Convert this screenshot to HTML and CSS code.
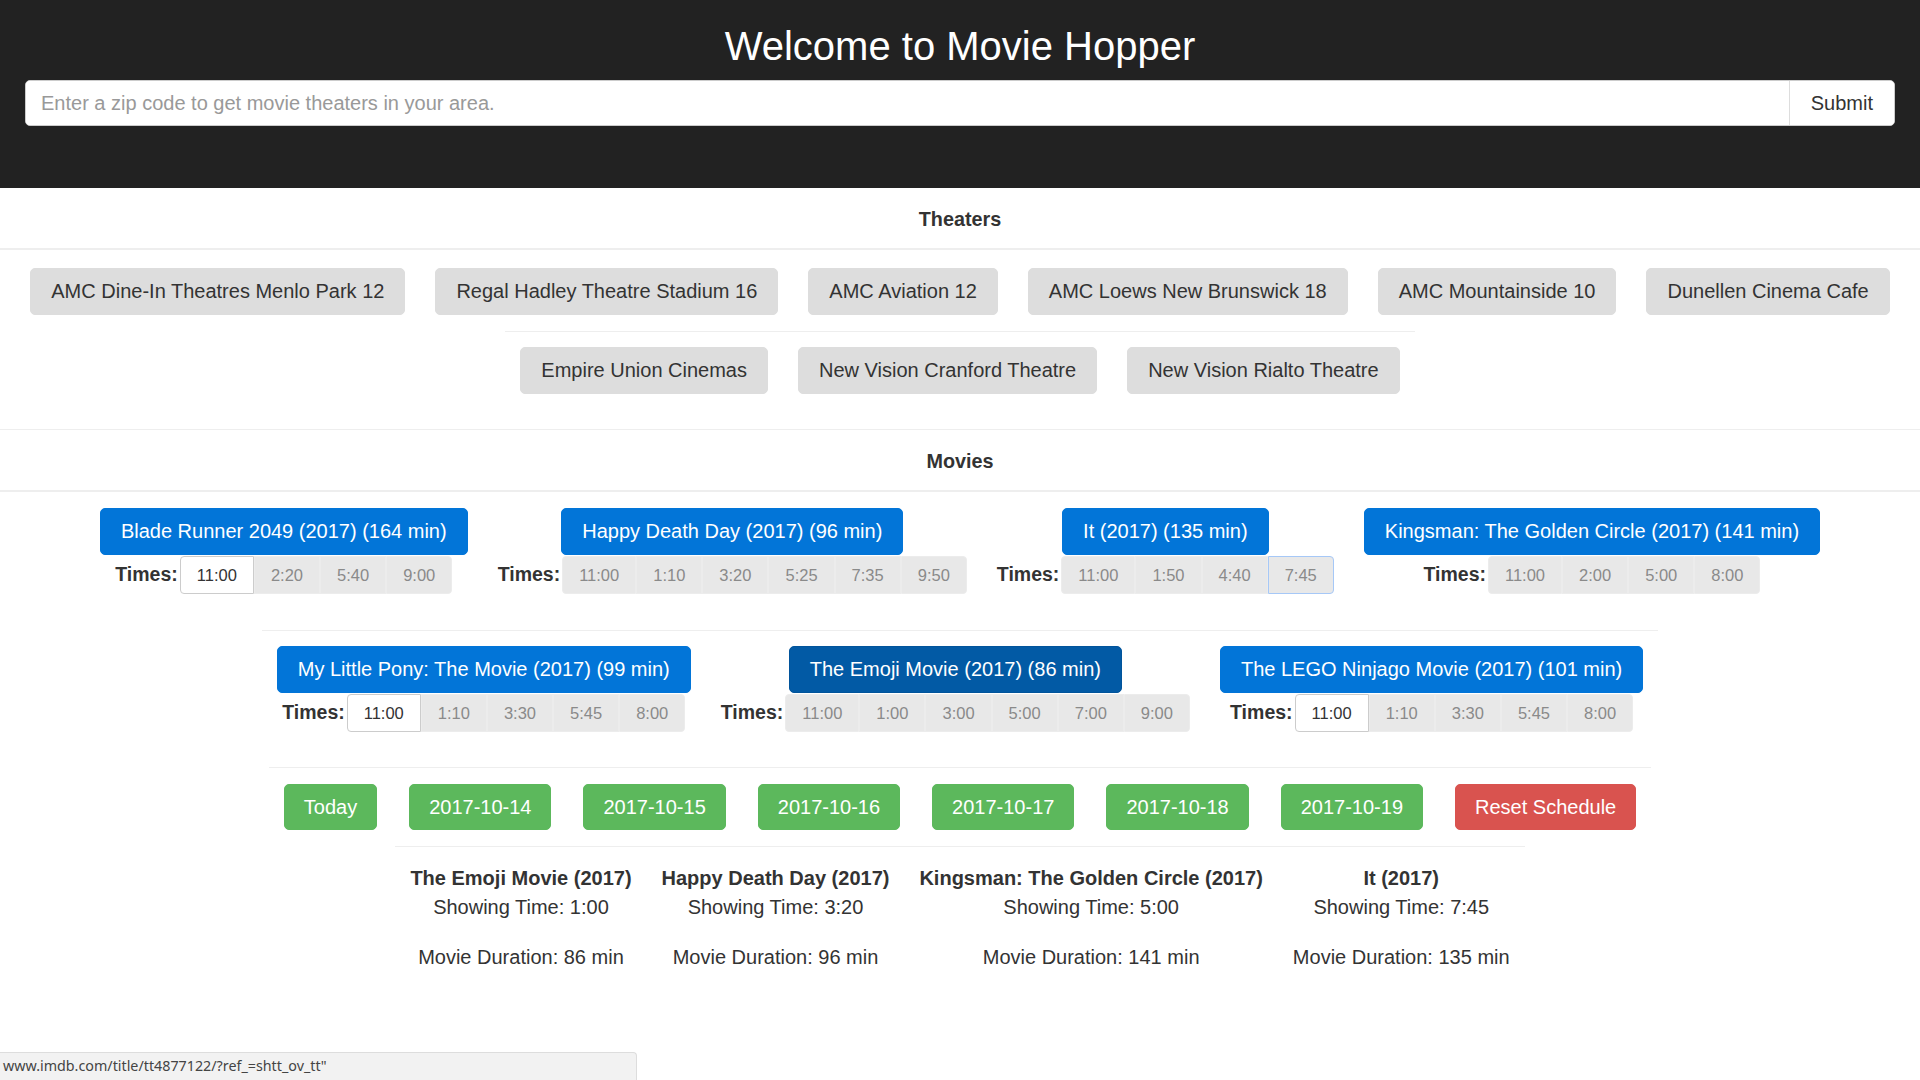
FILE: index.html
```html
<!DOCTYPE html>
<html lang="en">
<head>
<meta charset="utf-8">
<title>Movie Hopper</title>
<link rel="stylesheet" href="styles.css">
</head>
<body>
<header class="hero">
  <h1 class="hero-title">Welcome to Movie Hopper</h1>
  <form class="search" onsubmit="return false">
    <input class="search-input" type="text" placeholder="Enter a zip code to get movie theaters in your area.">
    <button class="search-btn" type="button">Submit</button>
  </form>
</header>

<section class="section section-theaters">
  <h2 class="section-title">Theaters</h2>
  <div class="row row-first">
    <button class="btn btn-theater">AMC Dine-In Theatres Menlo Park 12</button>
    <button class="btn btn-theater">Regal Hadley Theatre Stadium 16</button>
    <button class="btn btn-theater">AMC Aviation 12</button>
    <button class="btn btn-theater">AMC Loews New Brunswick 18</button>
    <button class="btn btn-theater">AMC Mountainside 10</button>
    <button class="btn btn-theater">Dunellen Cinema Cafe</button>
  </div>
  <div class="row row-theaters-2">
    <button class="btn btn-theater">Empire Union Cinemas</button>
    <button class="btn btn-theater">New Vision Cranford Theatre</button>
    <button class="btn btn-theater">New Vision Rialto Theatre</button>
  </div>
</section>

<section class="section section-movies">
  <h2 class="section-title">Movies</h2>
  <div class="row row-first row-movies">
    <div class="movie">
      <button class="btn btn-movie">Blade Runner 2049 (2017) (164 min)</button>
      <div class="times"><span class="times-label">Times:</span><div class="time-group"><button class="time time-on">11:00</button><button class="time">2:20</button><button class="time">5:40</button><button class="time">9:00</button></div></div>
    </div>
    <div class="movie">
      <button class="btn btn-movie">Happy Death Day (2017) (96 min)</button>
      <div class="times"><span class="times-label">Times:</span><div class="time-group"><button class="time">11:00</button><button class="time">1:10</button><button class="time">3:20</button><button class="time">5:25</button><button class="time">7:35</button><button class="time">9:50</button></div></div>
    </div>
    <div class="movie">
      <button class="btn btn-movie">It (2017) (135 min)</button>
      <div class="times"><span class="times-label">Times:</span><div class="time-group"><button class="time">11:00</button><button class="time">1:50</button><button class="time">4:40</button><button class="time time-focus">7:45</button></div></div>
    </div>
    <div class="movie">
      <button class="btn btn-movie">Kingsman: The Golden Circle (2017) (141 min)</button>
      <div class="times"><span class="times-label">Times:</span><div class="time-group"><button class="time">11:00</button><button class="time">2:00</button><button class="time">5:00</button><button class="time">8:00</button></div></div>
    </div>
  </div>
  <div class="row row-movies row-movies-2">
    <div class="movie">
      <button class="btn btn-movie">My Little Pony: The Movie (2017) (99 min)</button>
      <div class="times"><span class="times-label">Times:</span><div class="time-group"><button class="time time-on">11:00</button><button class="time">1:10</button><button class="time">3:30</button><button class="time">5:45</button><button class="time">8:00</button></div></div>
    </div>
    <div class="movie">
      <button class="btn btn-movie btn-movie-active">The Emoji Movie (2017) (86 min)</button>
      <div class="times"><span class="times-label">Times:</span><div class="time-group"><button class="time">11:00</button><button class="time">1:00</button><button class="time">3:00</button><button class="time">5:00</button><button class="time">7:00</button><button class="time">9:00</button></div></div>
    </div>
    <div class="movie">
      <button class="btn btn-movie">The LEGO Ninjago Movie (2017) (101 min)</button>
      <div class="times"><span class="times-label">Times:</span><div class="time-group"><button class="time time-on">11:00</button><button class="time">1:10</button><button class="time">3:30</button><button class="time">5:45</button><button class="time">8:00</button></div></div>
    </div>
  </div>
  <div class="row row-dates">
    <button class="btn btn-date">Today</button>
    <button class="btn btn-date">2017-10-14</button>
    <button class="btn btn-date">2017-10-15</button>
    <button class="btn btn-date">2017-10-16</button>
    <button class="btn btn-date">2017-10-17</button>
    <button class="btn btn-date">2017-10-18</button>
    <button class="btn btn-date">2017-10-19</button>
    <button class="btn btn-reset">Reset Schedule</button>
  </div>
  <div class="row row-schedule">
    <div class="sched">
      <div class="sched-title">The Emoji Movie (2017)</div>
      <div class="sched-line">Showing Time: 1:00</div>
      <div class="sched-line sched-duration">Movie Duration: 86 min</div>
    </div>
    <div class="sched">
      <div class="sched-title">Happy Death Day (2017)</div>
      <div class="sched-line">Showing Time: 3:20</div>
      <div class="sched-line sched-duration">Movie Duration: 96 min</div>
    </div>
    <div class="sched">
      <div class="sched-title">Kingsman: The Golden Circle (2017)</div>
      <div class="sched-line">Showing Time: 5:00</div>
      <div class="sched-line sched-duration">Movie Duration: 141 min</div>
    </div>
    <div class="sched">
      <div class="sched-title">It (2017)</div>
      <div class="sched-line">Showing Time: 7:45</div>
      <div class="sched-line sched-duration">Movie Duration: 135 min</div>
    </div>
  </div>
</section>

<div class="status-bar">www.imdb.com/title/tt4877122/?ref_=shtt_ov_tt"</div>
</body>
</html>
```

FILE: styles.css
```css
* { box-sizing: border-box; }

html, body {
  margin: 0;
  padding: 0;
  background: #fff;
}

body {
  font-family: "Liberation Sans", Arial, sans-serif;
  color: #333;
  font-size: 20px;
}

/* Header */
.hero {
  background: #222;
  height: 188px;
  padding: 24px 25px 0;
}

.hero-title {
  margin: 0;
  font-size: 40px;
  font-weight: normal;
  line-height: 44px;
  color: #fff;
  text-align: center;
}

.search {
  display: flex;
  margin-top: 12px;
  height: 46px;
  background: #fff;
  border: 1px solid #ccc;
  border-radius: 5px;
  overflow: hidden;
}

.search-input {
  flex: 1;
  border: 0;
  outline: none;
  padding: 0 15px;
  font-family: inherit;
  font-size: 20px;
  color: #555;
  background: #fff;
}

.search-input::placeholder {
  color: #999;
}

.search-btn {
  border: 0;
  border-left: 1px solid #ddd;
  background: #fff;
  padding: 0 21px;
  font-family: inherit;
  font-size: 20px;
  color: #333;
}

/* Sections */
.section-theaters {
  padding-bottom: 35px;
  border-bottom: 1px solid #eee;
}

.section-title {
  margin: 0;
  height: 62px;
  line-height: 62px;
  text-align: center;
  font-size: 19.8px;
  font-weight: bold;
  color: #333;
  border-bottom: 2px solid #eee;
}

.row {
  display: flex;
  justify-content: center;
  gap: 30px;
  width: fit-content;
  margin: 0 auto;
  padding: 15px 15px 0;
  border-top: 1px solid #eee;
}

.row-first {
  border-top: 0;
  padding-top: 18px;
}

.row-theaters-2 {
  margin-top: 16px;
}

.section-movies .row-first {
  padding-top: 16px;
}

.row-movies-2 {
  margin-top: 36px;
}

.row-dates {
  margin-top: 35px;
  padding-top: 16px;
  gap: 32px;
}

.row-schedule {
  margin-top: 16px;
  padding-top: 17px;
  gap: 30px;
}

/* Buttons */
.btn {
  font-family: inherit;
  font-size: 20px;
  height: 47px;
  line-height: 45px;
  padding: 0 19px;
  border: 1px solid transparent;
  border-radius: 5px;
  white-space: nowrap;
  cursor: pointer;
}

.btn-theater {
  background: #ddd;
  border-color: #ddd;
  color: #333;
  padding: 0 20px;
}

.btn-movie {
  background: #0275d8;
  border-color: #0275d8;
  color: #fff;
  padding: 0 20px;
}

.btn-movie-active {
  background: #025aa5;
  border-color: #01549b;
}

.btn-date {
  background: #5cb85c;
  border-color: #5cb85c;
  color: #fff;
  height: 46px;
  line-height: 44px;
}

.btn-reset {
  background: #d9534f;
  border-color: #d9534f;
  color: #fff;
  height: 46px;
  line-height: 44px;
}

/* Movies */
.movie {
  display: flex;
  flex-direction: column;
  align-items: center;
}

.times {
  display: flex;
  align-items: baseline;
  margin-top: 1px;
}

.times-label {
  font-weight: bold;
  font-size: 19.5px;
  color: #333;
  margin-right: 2px;
}

.time-group {
  display: flex;
}

.time {
  font-family: inherit;
  font-size: 16.5px;
  height: 38px;
  line-height: 36px;
  padding: 0 16px;
  background: #e8e8e8;
  color: #8a8a8a;
  border: 1px solid #ececec;
  border-radius: 0;
}

.time:first-child {
  border-top-left-radius: 4px;
  border-bottom-left-radius: 4px;
}

.time:last-child {
  border-top-right-radius: 4px;
  border-bottom-right-radius: 4px;
}

.time-on {
  background: #fff;
  color: #333;
  border-color: #ccc;
}

.time-focus {
  border-color: #a6c8f7;
}

/* Schedule */
.sched {
  text-align: center;
}

.sched-title {
  font-weight: bold;
  line-height: 29px;
  font-size: 20px;
}

.sched-line {
  line-height: 29px;
}

.sched-duration {
  margin-top: 21px;
}

/* Status bar */
.status-bar {
  position: fixed;
  left: 0;
  bottom: 0;
  width: 637px;
  height: 28px;
  line-height: 26px;
  padding-left: 3px;
  background: #f2f2f2;
  border-top: 1px solid #ddd;
  border-right: 1px solid #ddd;
  border-top-right-radius: 4px;
  font-family: "Noto Sans", "DejaVu Sans", sans-serif;
  font-size: 14.3px;
  color: #444;
}
```
